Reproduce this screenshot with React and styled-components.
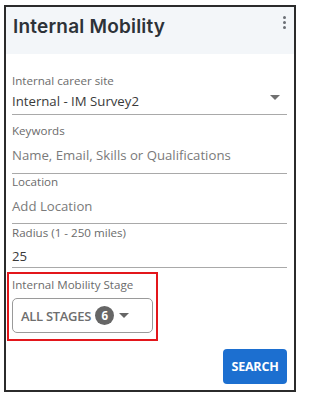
import React from 'react'
import styled, { createGlobalStyle } from 'styled-components'

const GlobalStyle = createGlobalStyle`
  body {
    margin: 0;
    background: #ffffff;
    font-family: 'Open Sans', 'Liberation Sans', sans-serif;
  }
`

const Card = styled.div`
  box-sizing: border-box;
  margin: 5px 0 0 4px;
  width: 292px;
  height: 387px;
  border: 2px solid #2b2b2b;
  background: #fff;
  display: flex;
  flex-direction: column;
`

const Header = styled.div`
  height: 47px;
  background: #f3f6f9;
  display: flex;
  align-items: flex-start;
  justify-content: space-between;
  padding: 0 8px 0 7px;
`

const Title = styled.h2`
  margin: 8px 0 0;
  font-family: 'Inter', sans-serif;
  font-weight: 600;
  font-size: 19px;
  line-height: 24px;
  color: #2d3238;
  letter-spacing: 0.2px;
`

const Kebab = styled.button`
  border: 0;
  background: none;
  padding: 0;
  margin-top: 9px;
  display: flex;
  flex-direction: column;
  gap: 2px;
  span {
    width: 3px;
    height: 3px;
    border-radius: 50%;
    background: #6b6f75;
  }
`

const Body = styled.div`
  padding: 19px 7px 0 6px;
  display: flex;
  flex-direction: column;
`

const Field = styled.div`
  margin-top: ${(p) => p.$top || 0}px;
  padding-bottom: ${(p) => p.$pad || 0}px;
  border-bottom: 1px solid #a9a9a9;
  position: relative;
`

const Label = styled.div`
  font-size: 11.6px;
  line-height: 16px;
  color: #6b6b6b;
`

const Value = styled.div`
  margin-top: ${(p) => p.$gap || 0}px;
  font-size: 13.2px;
  line-height: 20px;
  color: ${(p) => (p.$placeholder ? '#7a7a7a' : '#3a3a3a')};
`

const Caret = styled.span`
  position: absolute;
  right: ${(p) => p.$right || 0}px;
  top: ${(p) => p.$top || 0}px;
  width: 0;
  height: 0;
  border-left: ${(p) => p.$size}px solid transparent;
  border-right: ${(p) => p.$size}px solid transparent;
  border-top: ${(p) => p.$size}px solid ${(p) => p.$color};
`

const Highlight = styled.div`
  margin: 4px 0 0 -5px;
  width: 151px;
  box-sizing: border-box;
  border: 2px solid #e3161b;
  padding: 3px 3px 6px 3px;
`

const StageButton = styled.button`
  margin-top: 5px;
  width: 141px;
  height: 35px;
  box-sizing: border-box;
  border: 1px solid #9a9a9a;
  border-radius: 5px;
  background: #fff;
  display: flex;
  align-items: center;
  gap: 4px;
  padding: 0 0 0 8px;
  font-family: 'Open Sans', sans-serif;
  font-size: 13px;
  font-weight: 600;
  color: #6e6e6e;
  letter-spacing: -0.3px;
`

const Badge = styled.span`
  width: 19px;
  height: 19px;
  border-radius: 50%;
  background: #666;
  color: #fff;
  font-size: 11.5px;
  font-weight: 700;
  display: inline-flex;
  align-items: center;
  justify-content: center;
`

const InlineCaret = styled.span`
  width: 0;
  height: 0;
  margin-left: 1px;
  border-left: 5px solid transparent;
  border-right: 5px solid transparent;
  border-top: 5px solid #666;
`

const Actions = styled.div`
  display: flex;
  justify-content: flex-end;
  margin-top: 8px;
`

const SearchButton = styled.button`
  width: 64px;
  height: 35px;
  border: 0;
  border-radius: 4px;
  background: #1c6fd0;
  color: #fff;
  font-family: 'Open Sans', sans-serif;
  font-weight: 700;
  font-size: 12.5px;
  letter-spacing: -0.2px;
  padding: 0;
`

export default function App() {
  return (
    <>
      <GlobalStyle />
      <Card>
        <Header>
          <Title>Internal Mobility</Title>
          <Kebab aria-label="More">
            <span />
            <span />
            <span />
          </Kebab>
        </Header>
        <Body>
          <Field $pad={3}>
            <Label>Internal career site</Label>
            <Value $gap={2}>Internal - IM Survey2</Value>
            <Caret $right={7} $top={22} $size={5} $color="#707070" />
          </Field>
          <Field $top={8} $pad={8}>
            <Label>Keywords</Label>
            <Value $gap={6} $placeholder>
              Name, Email, Skills or Qualifications
            </Value>
          </Field>
          <Field $pad={7}>
            <Label>Location</Label>
            <Value $gap={6} $placeholder>
              Add Location
            </Value>
          </Field>
          <Field $top={1} $pad={1}>
            <Label>Radius (1 - 250 miles)</Label>
            <Value $gap={5}>25</Value>
          </Field>
          <Highlight>
            <Label>Internal Mobility Stage</Label>
            <StageButton>
              ALL STAGES
              <Badge>6</Badge>
              <InlineCaret />
            </StageButton>
          </Highlight>
          <Actions>
            <SearchButton>SEARCH</SearchButton>
          </Actions>
        </Body>
      </Card>
    </>
  )
}
